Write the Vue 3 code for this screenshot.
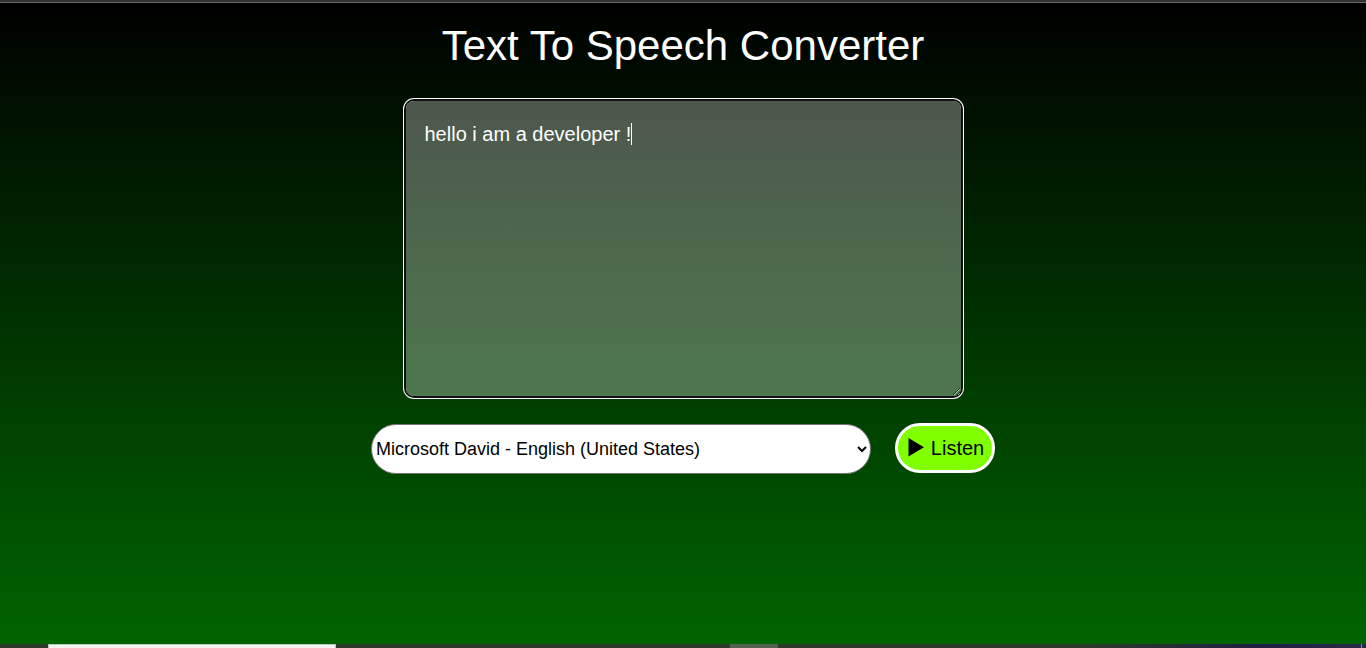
<script setup>
import { ref } from 'vue'

const text = ref('hello i am a developer !')
const voices = ['Microsoft David - English (United States)']
const voice = ref(voices[0])

function listen() {
  if (!('speechSynthesis' in window)) return
  window.speechSynthesis.speak(new SpeechSynthesisUtterance(text.value))
}
</script>

<template>
  <div class="screen">
    <div class="top-edge"></div>
    <main class="page">
      <h1>Text To Speech Converter</h1>
      <div class="editor">
        <textarea v-model="text" aria-label="Text to speak" spellcheck="false"></textarea>
        <span class="caret"></span>
      </div>
      <div class="controls">
        <select v-model="voice" aria-label="Voice">
          <option v-for="v in voices" :key="v" :value="v">{{ v }}</option>
        </select>
        <button type="button" @click="listen">
          <svg viewBox="0 0 16 20" aria-hidden="true"><path d="M0.5 0V18.5L16 9.2Z" /></svg>
          <span>Listen</span>
        </button>
      </div>
    </main>
    <div class="taskbar">
      <div class="task-search"></div>
      <div class="task-active"></div>
      <div class="task-end"></div>
    </div>
  </div>
</template>

<style>
body {
  margin: 0;
  background: #006400;
}
</style>

<style scoped>
.screen {
  display: flex;
  flex-direction: column;
  min-height: 100vh;
  font-family: "Liberation Sans", Arial, sans-serif;
}

.top-edge {
  height: 2px;
  background: #333;
  border-bottom: 1px solid #666;
}

.page {
  flex: 1;
  display: flex;
  flex-direction: column;
  align-items: center;
  background: linear-gradient(#000, #006400);
}

h1 {
  margin: 18px 0 30px;
  color: #fff;
  font-size: 42px;
  font-weight: 400;
  line-height: 50px;
}

.editor {
  position: relative;
  display: flex;
  width: 555px;
  max-width: 90%;
}

textarea {
  box-sizing: border-box;
  width: 100%;
  height: 295px;
  padding: 21px 19px;
  border: 0;
  border-radius: 8px;
  outline: 0;
  box-shadow: 0 0 0 2px #101010, 0 0 0 3px #fff;
  background: rgba(255, 255, 255, 0.3);
  color: #fff;
  font-family: inherit;
  font-size: 20px;
  line-height: 24px;
}

.caret {
  position: absolute;
  top: 22px;
  left: 225px;
  width: 1px;
  height: 22px;
  background: #fff;
}

.controls {
  display: flex;
  gap: 24px;
  margin-top: 27px;
}

select {
  box-sizing: border-box;
  width: 500px;
  height: 50px;
  margin-top: 1px;
  border: 1px solid #767676;
  border-radius: 50px;
  background: #fff;
  color: #000;
  font-family: inherit;
  font-size: 18px;
}

button {
  box-sizing: border-box;
  display: flex;
  align-items: center;
  justify-content: center;
  gap: 7px;
  width: 100px;
  height: 50px;
  padding: 0 0 0 2px;
  border: 3px solid #fff;
  border-radius: 50px;
  background: #7fff00;
  color: #000;
  font-family: inherit;
  font-size: 20px;
}

button svg {
  width: 16px;
  height: 20px;
}

.taskbar {
  display: flex;
  height: 4px;
  background: linear-gradient(90deg, #2c3a2c 80%, #1e1e40 92%, #2a2a48);
}

.task-search {
  box-sizing: border-box;
  width: 288px;
  margin-left: 48px;
  background: #f3f3f3;
  border: 1px solid #b8c8b8;
  border-bottom: 0;
}

.task-active {
  width: 48px;
  margin-left: 394px;
  background: #52634f;
}

.task-end {
  width: 1px;
  margin-left: auto;
  margin-right: 4px;
  background: #8a8a9c;
}
</style>
